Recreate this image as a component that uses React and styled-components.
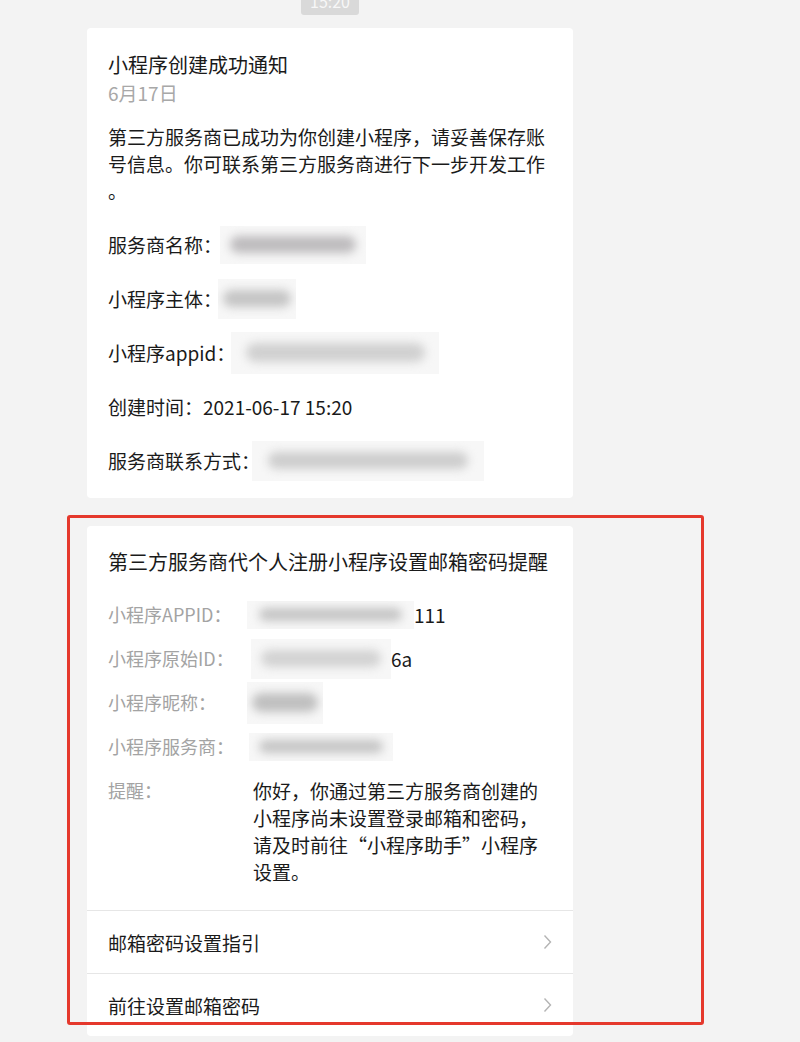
import styled, { createGlobalStyle } from 'styled-components'

const GlobalStyle = createGlobalStyle`
  html, body {
    margin: 0;
    padding: 0;
    background: #f3f3f3;
  }
  body {
    font-family: "Noto Sans CJK SC", "Noto Sans", sans-serif;
    color: #1a1a1a;
    overflow: hidden;
  }
`

const Page = styled.div`
  height: 1042px;
  overflow: hidden;
`

const Column = styled.div`
  width: 486px;
  margin-left: 87px;
  display: flex;
  flex-direction: column;
`

const Time = styled.div`
  align-self: center;
  margin-top: -9px;
  height: 24px;
  padding: 0 8px;
  width: 42px;
  border-radius: 3px;
  background: #d9d9d9;
  color: #f7f7f7;
  font-size: 16px;
  line-height: 20px;
  text-align: center;
`

const Card = styled.div`
  margin-top: 13px;
  background: #fff;
  border-radius: 4px;
  padding: 23px 21px 24px;
`

const Title = styled.div`
  font-size: 20px;
  line-height: 28px;
  white-space: nowrap;
`

const DateText = styled.div`
  font-size: 19px;
  line-height: 28px;
  color: #a8a8a8;
`

const Body = styled.p`
  margin: 16px 0 0;
  font-size: 19px;
  line-height: 27px;
  line-break: anywhere;
`

const Field = styled.div`
  margin-top: 27px;
  height: 27px;
  display: flex;
  align-items: center;
  font-size: 19px;
  white-space: nowrap;
`

const Blur = styled.span`
  flex: none;
  display: inline-block;
  position: relative;
  overflow: hidden;
  width: ${p => p.$w}px;
  height: ${p => p.$h || 36}px;
  margin-left: ${p => p.$ml || 0}px;
  background: #f7f7f7;
  &::after {
    content: '';
    position: absolute;
    left: 7%;
    right: 7%;
    top: 28%;
    bottom: 28%;
    border-radius: 12px;
    background: ${p => p.$tone || '#c4c4c4'};
    filter: blur(5px);
  }
`

const Marked = styled.div`
  position: relative;
  margin-top: 28px;
`

const Frame = styled.div`
  position: absolute;
  left: -20px;
  top: -11px;
  width: 631px;
  height: 504px;
  border: 3px solid #e5382c;
  border-radius: 3px;
  pointer-events: none;
`

const NoticeCard = styled.div`
  background: #fff;
  border-radius: 4px;
  height: 510px;
  overflow: hidden;
`

const NoticeHead = styled.div`
  padding: 22px 21px 25px;
  border-bottom: 1px solid #e6e6e6;
`

const Info = styled.div`
  margin-top: ${p => p.$first ? 25 : 17}px;
  display: grid;
  grid-template-columns: 145px 1fr;
  align-items: start;
`

const Label = styled.div`
  font-size: 18px;
  line-height: 27px;
  color: #a3a3a3;
  white-space: nowrap;
`

const Value = styled.div`
  height: ${p => p.$multi ? 'auto' : '27px'};
  display: flex;
  align-items: center;
  font-size: 19px;
  line-height: 27px;
  color: #1a1a1a;
  white-space: ${p => p.$multi ? 'normal' : 'nowrap'};
`

const MenuItem = styled.div`
  height: 62px;
  padding: 0 21px;
  display: flex;
  align-items: center;
  justify-content: space-between;
  font-size: 19px;
  border-bottom: 1px solid #e6e6e6;
`

const Chevron = () => (
  <svg width="9" height="16" viewBox="0 0 9 16" fill="none">
    <polyline points="1.5,1.5 7.5,8 1.5,14.5" stroke="#b4b4b4" strokeWidth="1.4" />
  </svg>
)

export default function App () {
  return (
    <Page>
      <GlobalStyle />
      <Column>
        <Time>15:20</Time>

        <Card>
          <Title>小程序创建成功通知</Title>
          <DateText>6月17日</DateText>
          <Body>第三方服务商已成功为你创建小程序，请妥善保存账号信息。你可联系第三方服务商进行下一步开发工作。</Body>
          <Field>服务商名称：<Blur $w={146} $h={38} $ml={-2} $tone='#bdbbbd' /></Field>
          <Field>小程序主体：<Blur $w={78} $h={40} $ml={-4} /></Field>
          <Field>小程序appid：<Blur $w={208} $h={42} $ml={-4} $tone='#d0d0d0' /></Field>
          <Field>创建时间：2021-06-17 15:20</Field>
          <Field>服务商联系方式：<Blur $w={232} $h={40} $ml={-8} $tone='#cdcdcd' /></Field>
        </Card>

        <Marked>
          <NoticeCard>
            <NoticeHead>
              <Title>第三方服务商代个人注册小程序设置邮箱密码提醒</Title>
              <Info $first>
                <Label>小程序APPID：</Label>
                <Value><Blur $w={167} $h={28} $ml={-6} />111</Value>
              </Info>
              <Info>
                <Label>小程序原始ID：</Label>
                <Value><Blur $w={140} $h={40} $ml={-2} $tone='#d2d2d2' />6a</Value>
              </Info>
              <Info>
                <Label>小程序昵称：</Label>
                <Value><Blur $w={76} $h={42} $ml={-6} $tone='#bfbfbf' /></Value>
              </Info>
              <Info>
                <Label>小程序服务商：</Label>
                <Value><Blur $w={144} $h={28} $ml={-4} /></Value>
              </Info>
              <Info>
                <Label>提醒：</Label>
                <Value $multi>你好，你通过第三方服务商创建的小程序尚未设置登录邮箱和密码，请及时前往“小程序助手”小程序设置。</Value>
              </Info>
            </NoticeHead>
            <MenuItem>邮箱密码设置指引<Chevron /></MenuItem>
            <MenuItem>前往设置邮箱密码<Chevron /></MenuItem>
          </NoticeCard>
          <Frame />
        </Marked>
      </Column>
    </Page>
  )
}
